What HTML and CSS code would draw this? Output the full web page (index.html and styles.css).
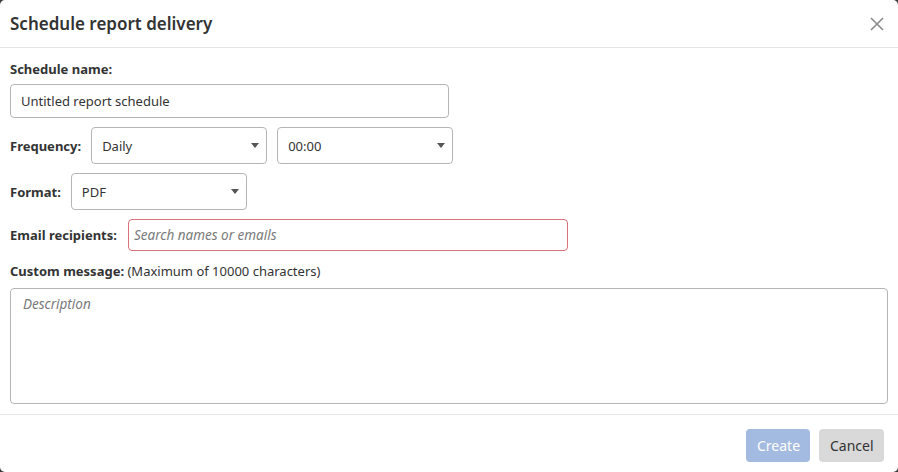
FILE: index.html
```html
<!DOCTYPE html>
<html>
<head>
<meta charset="utf-8">
<link rel="stylesheet" href="styles.css">
</head>
<body>
<div class="dialog">
  <div class="header">
    <h1 class="title">Schedule report delivery</h1>
    <button class="close" aria-label="Close">
      <svg width="14" height="14" viewBox="0 0 14 14"><path d="M1 1L13 13M13 1L1 13" stroke="#8a8a8a" stroke-width="1.6" fill="none"/></svg>
    </button>
  </div>
  <div class="body">
    <div class="label">Schedule name:</div>
    <div class="input name-input">Untitled report schedule</div>
    <div class="row freq-row">
      <span class="label">Frequency:</span>
      <div class="select"><span>Daily</span><span class="caret"></span></div>
      <div class="select"><span>00:00</span><span class="caret"></span></div>
    </div>
    <div class="row">
      <span class="label">Format:</span>
      <div class="select"><span>PDF</span><span class="caret"></span></div>
    </div>
    <div class="row email-row">
      <span class="label">Email recipients:</span>
      <div class="input email-input">Search names or emails</div>
    </div>
    <div class="msg-label"><span class="label">Custom message:</span> (Maximum of 10000 characters)</div>
    <div class="textarea">Description</div>
  </div>
  <div class="footer">
    <button class="btn btn-create">Create</button>
    <button class="btn btn-cancel">Cancel</button>
  </div>
</div>
</body>
</html>
```
FILE: styles.css
```css
html, body {
  margin: 0;
  padding: 0;
  background: #3a3a3a;
}
body {
  font-family: "Noto Sans", "Open Sans", sans-serif;
  color: #333;
  font-size: 13px;
}
.dialog {
  width: 898px;
  height: 472px;
  background: #fff;
  border-radius: 5px;
  display: flex;
  flex-direction: column;
  overflow: hidden;
}
.header {
  height: 47px;
  border-bottom: 1px solid #e4e4e4;
  display: flex;
  align-items: center;
  justify-content: space-between;
  padding: 0 14px 0 10px;
  box-sizing: content-box;
}
.title {
  margin: 0;
  font-size: 17px;
  font-weight: 600;
  color: #333;
}
.close {
  border: none;
  background: none;
  padding: 0;
  width: 14px;
  height: 14px;
  display: flex;
}
.body {
  padding: 11px 10px 0 10px;
  display: flex;
  flex-direction: column;
  flex: 1;
}
.label {
  font-weight: 700;
  line-height: 20px;
  color: #333;
}
.input {
  border: 1px solid #b5b5b5;
  border-radius: 4px;
  box-sizing: border-box;
  display: flex;
  align-items: center;
}
.name-input {
  margin-top: 5px;
  width: 439px;
  height: 34px;
  padding-left: 10px;
  color: #333;
}
.row {
  display: flex;
  align-items: center;
  gap: 10px;
  margin-top: 9px;
}
.select {
  width: 176px;
  height: 37px;
  box-sizing: border-box;
  border: 1px solid #b5b5b5;
  border-radius: 4px;
  display: flex;
  align-items: center;
  justify-content: space-between;
  padding: 0 7px 0 10px;
  color: #333;
}
.caret {
  width: 0;
  height: 0;
  border-left: 4px solid transparent;
  border-right: 4px solid transparent;
  border-top: 5px solid #555;
}
.email-row {
  margin-top: 9px;
  gap: 11px;
}
.email-input {
  width: 440px;
  height: 32px;
  border-color: #d9727c;
  padding-left: 5px;
  font-style: italic;
  font-size: 13.5px;
  color: #7a7a7a;
}
.msg-label {
  margin-top: 10px;
  line-height: 20px;
  color: #333;
}
.textarea {
  margin-top: 7px;
  height: 116px;
  box-sizing: border-box;
  border: 1px solid #b5b5b5;
  border-radius: 4px;
  padding: 6px 12px;
  font-style: italic;
  font-size: 13.5px;
  color: #7a7a7a;
}
.footer {
  border-top: 1px solid #e6e6e6;
  margin-top: 10px;
  height: 58px;
  display: flex;
  justify-content: flex-end;
  align-items: flex-start;
  gap: 9px;
  padding: 14px 14px 0 0;
  box-sizing: border-box;
}
.btn {
  font-family: inherit;
  font-size: 14px;
  height: 33px;
  border: none;
  border-radius: 4px;
  padding: 0 11px;
}
.btn-create {
  background: #a3bbe0;
  color: #fff;
  width: 64px;
}
.btn-cancel {
  background: #d9d9d9;
  color: #333;
  width: 65px;
}
```
